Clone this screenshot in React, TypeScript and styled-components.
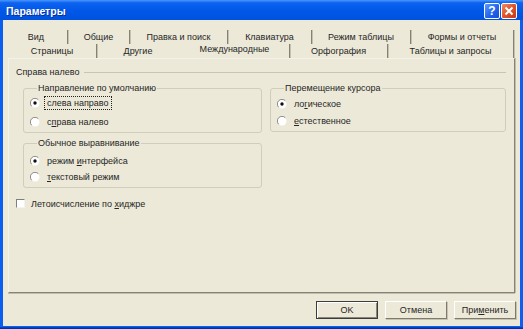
import React from "react";
import styled, { createGlobalStyle } from "styled-components";

const Global = createGlobalStyle`
  html, body { margin: 0; padding: 0; overflow: hidden; background: #ece9d8; }
  body { font-family: "Liberation Sans", Arial, sans-serif; color: #262626; }
  button { font-family: inherit; }
`;

const Frame = styled.div`
  width: 523px;
  height: 329px;
  box-sizing: border-box;
  display: flex;
  flex-direction: column;
  background: #0a5ef0;
  padding: 0 3px 3px;
  box-shadow: inset 0 -1px 0 #0033a8, inset 0 -2px 0 #0045c8;
`;

const TitleBar = styled.div`
  height: 20px;
  margin: 0 -3px;
  padding: 0 6px 0 6px;
  display: flex;
  align-items: center;
  justify-content: space-between;
  background: linear-gradient(180deg, #4a97ff 0%, #0d63ef 14%, #0057e8 55%, #0052de 100%);
`;

const Title = styled.div`
  color: #fff;
  font-weight: bold;
  font-size: 10.5px;
  text-shadow: 1px 1px 0 #0a2f9c;
  padding-top: 1px;
`;

const Caps = styled.div`
  display: flex;
  gap: 1px;
  padding-top: 1px;
`;

const CapBtn = styled.div<{ $kind: "help" | "close" }>`
  width: 16px;
  height: 16px;
  box-sizing: border-box;
  border: 1px solid #fff;
  border-radius: 2px;
  display: flex;
  align-items: center;
  justify-content: center;
  color: #fff;
  font-weight: bold;
  font-size: 12px;
  background: ${(p) =>
    p.$kind === "close"
      ? "linear-gradient(135deg, #f08a62 0%, #e0532a 50%, #c63a12 100%)"
      : "linear-gradient(135deg, #5c9bff 0%, #2465ec 55%, #1550d4 100%)"};
`;

const Body = styled.div`
  flex: 1;
  background: #ece9d8;
  display: flex;
  flex-direction: column;
  padding: 9px 3px 7px 5px;
`;

const TabStrip = styled.div`
  display: flex;
  flex-direction: column;
  height: 29px;
`;

const TabRow = styled.div<{ $shift?: number }>`
  display: flex;
  height: 14px;
  margin-left: ${(p) => p.$shift ?? 0}px;
  &:first-child { margin-top: 1px; }
`;

const Tab = styled.div<{ $w: number; $sep?: boolean; $active?: boolean }>`
  width: ${(p) => p.$w}px;
  box-sizing: border-box;
  display: flex;
  align-items: center;
  justify-content: center;
  font-size: 9px;
  white-space: nowrap;
  padding-bottom: ${(p) => (p.$active ? 4 : 0)}px;
  border-right: 1px solid ${(p) => (p.$sep ? "#858274" : "transparent")};
  box-shadow: ${(p) => (p.$sep ? "1px 0 0 #c4c1b1" : "none")};
`;

const Panel = styled.div`
  height: 235px;
  box-sizing: border-box;
  border-left: 1px solid #f3f1e8;
  border-top: 1px solid #f3f1e8;
  border-right: 1px solid #868376;
  border-bottom: 1px solid #868376;
  box-shadow: 1px 0 0 #c0bdad, 0 1px 0 #c0bdad;
  margin-right: 2px;
  padding: 7px 8px 0 7px;
  display: flex;
  flex-direction: column;
`;

const SectionHead = styled.div`
  display: flex;
  align-items: center;
  gap: 4px;
  height: 12px;
  font-size: 9px;
`;

const Rule = styled.div`
  flex: 1;
  height: 1px;
  background: #c8c5b5;
`;

const Columns = styled.div`
  display: grid;
  grid-template-columns: 239px 1fr;
  column-gap: 8px;
  align-items: start;
  margin: 4px 0 0 7px;
`;

const Stack = styled.div`
  display: flex;
  flex-direction: column;
  gap: 4px;
`;

const Group = styled.fieldset<{ $pt: number; $gap: number }>`
  margin: 0;
  min-width: 0;
  border: 1px solid #d0cdbd;
  border-radius: 3px;
  padding: ${(p) => p.$pt}px 6px 4px 6px;
  display: flex;
  flex-direction: column;
  gap: ${(p) => p.$gap}px;
`;

const Legend = styled.legend`
  font-size: 9px;
  line-height: 12px;
  padding: 0 1px;
  margin-left: 7px;
`;

const OptionRow = styled.label`
  display: flex;
  align-items: center;
  height: 13px;
  gap: 7px;
  font-size: 9px;
  white-space: nowrap;
`;

const Focus = styled.span`
  outline: 1px dotted #222;
  outline-offset: 1px;
  padding: 0 1px;
  margin-left: -1px;
`;

const CheckRow = styled(OptionRow)`
  margin-top: 9px;
  gap: 6px;
`;

const Box = styled.span`
  width: 9px;
  height: 9px;
  box-sizing: border-box;
  background: #fff;
  border-top: 1px solid #7f7f7f;
  border-left: 1px solid #7f7f7f;
  border-right: 1px solid #f4f3ee;
  border-bottom: 1px solid #f4f3ee;
`;

const ButtonRow = styled.div`
  display: flex;
  justify-content: flex-end;
  gap: 7px;
  margin-top: 8px;
  padding-right: 1px;
`;

const Btn = styled.button<{ $default?: boolean; $w: number }>`
  width: ${(p) => p.$w}px;
  height: 18px;
  box-sizing: border-box;
  padding: 0;
  font-size: 9px;
  color: #262626;
  background: #ece9d8;
  border: 1px solid;
  border-color: ${(p) => (p.$default ? "#3c3c3c" : "#ffffff #7e7b6e #7e7b6e #ffffff")};
  box-shadow: ${(p) =>
    p.$default
      ? "inset 1px 1px 0 #fff, inset -1px -1px 0 #8a8778"
      : "1px 1px 0 #c6c3b3"};
`;

function Radio({ checked }: { checked?: boolean }) {
  return (
    <svg width="10" height="10" viewBox="0 0 10 10">
      <circle cx="5" cy="5" r="4.5" fill="#fff" />
      <path d="M8.3 1.7 A4.6 4.6 0 0 0 1.7 8.3" stroke="#8a8a8a" strokeWidth="1" fill="none" />
      {checked && <circle cx="5" cy="5" r="1.7" fill="#111" />}
    </svg>
  );
}

const row1 = [
  { t: "Вид", w: 63 },
  { t: "Общие", w: 62 },
  { t: "Правка и поиск", w: 98 },
  { t: "Клавиатура", w: 84 },
  { t: "Режим таблицы", w: 99 },
  { t: "Формы и отчеты", w: 103 },
];

const row2 = [
  { t: "Страницы", w: 89, sep: true },
  { t: "Другие", w: 83 },
  { t: "Международные", w: 110, sep: true, active: true },
  { t: "Орфография", w: 98, sep: true },
  { t: "Таблицы и запросы", w: 126, sep: true },
];

export default function App() {
  return (
    <>
      <Global />
      <Frame>
        <TitleBar>
          <Title>Параметры</Title>
          <Caps>
            <CapBtn $kind="help">?</CapBtn>
            <CapBtn $kind="close">
              <svg width="10" height="10" viewBox="0 0 10 10">
                <path d="M1.5 1.5 L8.5 8.5 M8.5 1.5 L1.5 8.5" stroke="#fff" strokeWidth="2" />
              </svg>
            </CapBtn>
          </Caps>
        </TitleBar>
        <Body>
          <TabStrip>
            <TabRow $shift={-3}>
              {row1.map((t) => (
                <Tab key={t.t} $w={t.w} $sep>
                  {t.t}
                </Tab>
              ))}
            </TabRow>
            <TabRow>
              {row2.map((t) => (
                <Tab key={t.t} $w={t.w} $sep={t.sep} $active={t.active}>
                  {t.t}
                </Tab>
              ))}
            </TabRow>
          </TabStrip>
          <Panel>
            <SectionHead>
              <span>Справа налево</span>
              <Rule />
            </SectionHead>
            <Columns>
              <Stack>
                <Group $pt={2} $gap={6}>
                  <Legend>Направление по умолчанию</Legend>
                  <OptionRow>
                    <Radio checked />
                    <Focus>слева направо</Focus>
                  </OptionRow>
                  <OptionRow>
                    <Radio />
                    <span>с<u>п</u>рава налево</span>
                  </OptionRow>
                </Group>
                <Group $pt={5} $gap={3}>
                  <Legend>Обычное выравнивание</Legend>
                  <OptionRow>
                    <Radio checked />
                    <span>режим <u>и</u>нтерфейса</span>
                  </OptionRow>
                  <OptionRow>
                    <Radio />
                    <span><u>т</u>екстовый режим</span>
                  </OptionRow>
                </Group>
              </Stack>
              <Group $pt={3} $gap={4}>
                <Legend>Перемещение курсора</Legend>
                <OptionRow>
                  <Radio checked />
                  <span>ло<u>г</u>ическое</span>
                </OptionRow>
                <OptionRow>
                  <Radio />
                  <span><u>е</u>стественное</span>
                </OptionRow>
              </Group>
            </Columns>
            <CheckRow>
              <Box />
              <span>Летоисчисление по <u>х</u>иджре</span>
            </CheckRow>
          </Panel>
          <ButtonRow>
            <Btn $default $w={62}>OK</Btn>
            <Btn $w={62}>Отмена</Btn>
            <Btn $w={62}>
              При<u>м</u>енить
            </Btn>
          </ButtonRow>
        </Body>
      </Frame>
    </>
  );
}
